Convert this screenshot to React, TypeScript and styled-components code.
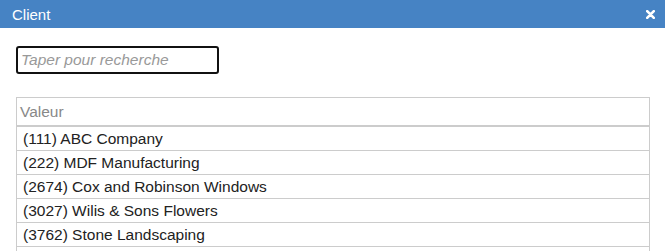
import styled, { createGlobalStyle } from 'styled-components';

const GlobalStyle = createGlobalStyle`
  html, body {
    margin: 0;
    padding: 0;
    overflow: hidden;
    background: #fff;
    font-family: "Liberation Sans", Arial, sans-serif;
  }
`;

const Dialog = styled.div`
  width: 665px;
  height: 251px;
  overflow: hidden;
  background: #fff;
  display: flex;
  flex-direction: column;
`;

const TitleBar = styled.div`
  flex: none;
  height: 28px;
  background: #4683c4;
  color: #fff;
  display: flex;
  align-items: center;
  justify-content: space-between;
  padding: 0 10px 0 12px;
  font-size: 15px;
`;

const CloseButton = styled.button`
  border: 0;
  background: none;
  padding: 0;
  width: 10px;
  height: 10px;
  display: flex;
  align-items: center;
  justify-content: center;
  cursor: pointer;
`;

const Body = styled.div`
  flex: 1;
  padding: 18px 15px 0 16px;
  display: flex;
  flex-direction: column;
  gap: 23px;
`;

const Search = styled.input`
  box-sizing: border-box;
  width: 203px;
  height: 28px;
  border: 2px solid #111;
  border-radius: 3px;
  padding: 0 3px;
  font-family: "Liberation Sans", Arial, sans-serif;
  font-size: 15.5px;
  outline: none;
  &::placeholder {
    color: #999;
    font-style: italic;
  }
`;

// side borders run on past the last row, like the scrolling list in the reference
const GridFrame = styled.div`
  flex: 1;
  width: 634px;
  box-sizing: border-box;
  border: 1px solid #ccc;
  border-bottom: 0;
`;

const Grid = styled.table`
  width: 100%;
  border-collapse: collapse;
  font-size: 15.5px;
`;

const HeadCell = styled.th`
  height: 27px;
  padding: 0 3px;
  text-align: left;
  font-weight: normal;
  color: #888;
  border-bottom: 2px solid #ccc;
`;

const Cell = styled.td`
  height: 23px;
  padding: 0 6px;
  color: #222;
  border-bottom: 1px solid #ccc;
`;

const clients = [
  '(111) ABC Company',
  '(222) MDF Manufacturing',
  '(2674) Cox and Robinson Windows',
  '(3027) Wilis & Sons Flowers',
  '(3762) Stone Landscaping',
];

export default function App(): JSX.Element {
  return (
    <Dialog>
      <GlobalStyle />
      <TitleBar>
        <span>Client</span>
        <CloseButton aria-label="Fermer">
          <svg width="9" height="9" viewBox="0 0 9 9">
            <path d="M1.2 1.2L7.8 7.8M7.8 1.2L1.2 7.8" stroke="#fff" strokeWidth="2.6" strokeLinecap="round" />
          </svg>
        </CloseButton>
      </TitleBar>
      <Body>
        <Search placeholder="Taper pour recherche" />
        <GridFrame>
          <Grid>
            <thead>
              <tr>
                <HeadCell>Valeur</HeadCell>
              </tr>
            </thead>
            <tbody>
              {clients.map((c) => (
                <tr key={c}>
                  <Cell>{c}</Cell>
                </tr>
              ))}
            </tbody>
          </Grid>
        </GridFrame>
      </Body>
    </Dialog>
  );
}
